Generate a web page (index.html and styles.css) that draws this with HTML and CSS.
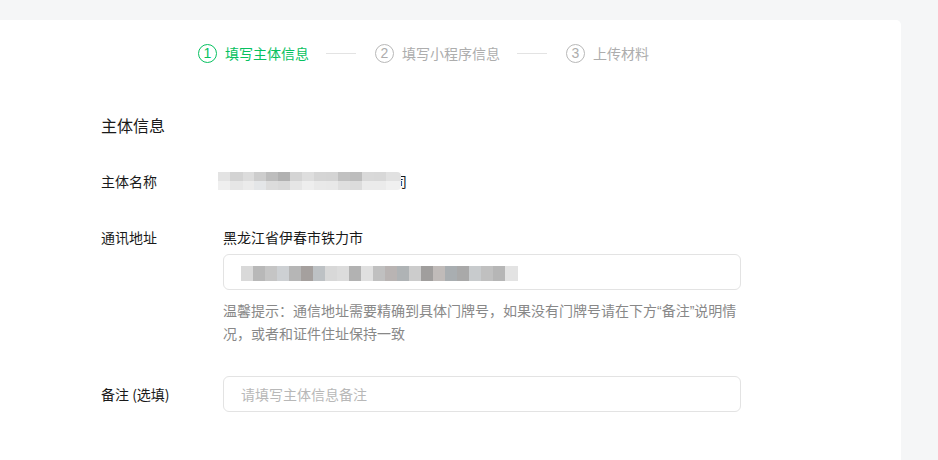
FILE: index.html
```html
<!DOCTYPE html>
<html lang="zh-CN">
<head>
<meta charset="utf-8">
<title>填写主体信息</title>
<link rel="stylesheet" href="styles.css">
</head>
<body>
<div class="card">
  <div class="steps">
    <div class="step active"><span class="num">1</span><span class="label">填写主体信息</span></div>
    <span class="line"></span>
    <div class="step"><span class="num">2</span><span class="label">填写小程序信息</span></div>
    <span class="line"></span>
    <div class="step"><span class="num">3</span><span class="label">上传材料</span></div>
  </div>

  <div class="form">
    <h2 class="title">主体信息</h2>

    <div class="row row-name">
      <div class="field-label">主体名称</div>
      <div class="field-value">
        <span class="mosaic mosaic-name"><span class="m-top"></span><span class="m-bottom"></span></span><span class="clip"><span class="clip-char">司</span></span>
      </div>
    </div>

    <div class="row row-addr">
      <div class="field-label">通讯地址</div>
      <div class="field-value">
        <div class="region">黑龙江省伊春市铁力市</div>
        <div class="input"><span class="mosaic mosaic-addr"></span></div>
        <p class="hint">温馨提示：通信地址需要精确到具体门牌号，如果没有门牌号请在下方<span class="q">“</span>备注<span class="q">”</span>说明情况，或者和证件住址保持一致</p>
      </div>
    </div>

    <div class="row row-note">
      <div class="field-label">备注 (选填)</div>
      <div class="field-value">
        <div class="input"><span class="placeholder">请填写主体信息备注</span></div>
      </div>
    </div>
  </div>
</div>
</body>
</html>
```

FILE: styles.css
```css
html, body {
  margin: 0;
  padding: 0;
}
body {
  background: #f5f6f7;
  font-family: "Noto Sans CJK SC", "Liberation Sans", sans-serif;
  color: #1a1a1a;
  font-size: 14px;
  padding-top: 20px;
  height: 440px;
  overflow: hidden;
}
.card {
  width: 901px;
  height: 460px;
  background: #fff;
  border-top-right-radius: 5px;
  box-sizing: border-box;
  padding-top: 23px;
}
.steps {
  display: flex;
  align-items: center;
  padding-left: 198px;
  height: 20px;
}
.step {
  display: flex;
  align-items: center;
  color: #adadad;
}
.num {
  width: 17px;
  height: 17px;
  border: 1px solid #b8b8b8;
  border-radius: 50%;
  display: flex;
  align-items: center;
  justify-content: center;
  font-family: "Liberation Sans", sans-serif;
  font-size: 14px;
  line-height: 1;
  margin-right: 8px;
}
.step.active { color: #07c160; }
.step.active .num { border-color: #07c160; }
.label {
  font-size: 14px;
  line-height: 20px;
}
.line {
  width: 30px;
  height: 1px;
  background: #e3e3e3;
  margin: 0 19px 0 17px;
}

.form {
  padding-left: 101px;
}
.title {
  margin: 50px 0 0;
  font-size: 16px;
  font-weight: normal;
  line-height: 24px;
  color: #1a1a1a;
}
.row {
  display: grid;
  grid-template-columns: 122px 518px;
}
.field-label {
  line-height: 20px;
  color: #1a1a1a;
}
.row-name { margin-top: 34px; }
.row-name .field-value {
  display: flex;
  align-items: center;
  margin-left: -5px;
  height: 20px;
}
.mosaic { display: block; }
.mosaic-name {
  width: 183px;
  height: 18px;
  display: flex;
  flex-direction: column;
  border-radius: 0 4px 4px 0;
  overflow: hidden;
}
.m-top, .m-bottom { flex: 1; display: block; }
.m-top {
  background: linear-gradient(to right,
    #e3e3e3 0 12px, #d3d3d3 12px 25px, #dcdcdc 25px 36px, #cdcdcd 36px 48px,
    #bdbdbd 48px 60px, #b1b1b1 60px 72px, #d4d4d4 72px 84px, #dedede 84px 96px,
    #d5d5d5 96px 108px, #d4d4d4 108px 120px, #c1c1c1 120px 132px, #bdbdbd 132px 144px,
    #d9d9d9 144px 156px, #d8d8d8 156px 168px, #e1e1e1 168px 183px);
}
.m-bottom {
  background: linear-gradient(to right,
    #efefef 0 12px, #e6e6e6 12px 25px, #ebebeb 25px 36px, #e4e6e8 36px 48px,
    #dcdcdc 48px 60px, #d9d9d9 60px 72px, #e6e6e6 72px 84px, #eeeeee 84px 96px,
    #e9e9e9 96px 108px, #e8e8e8 108px 120px, #dfdfdf 120px 132px, #dcdcdc 132px 144px,
    #ebebeb 144px 156px, #ebebeb 156px 168px, #f0f0f0 168px 183px);
}
.clip {
  display: inline-block;
  width: 6px;
  overflow: hidden;
  line-height: 20px;
}
.clip-char {
  display: inline-block;
  margin-left: -8px;
}

.row-addr { margin-top: 36px; }
.region {
  line-height: 20px;
  color: #1a1a1a;
}
.input {
  margin-top: 7px;
  height: 36px;
  box-sizing: border-box;
  border: 1px solid #e3e3e3;
  border-radius: 6px;
  display: flex;
  align-items: center;
  padding-left: 17px;
}
.mosaic-addr {
  width: 277px;
  height: 15px;
  margin-top: 2px;
  background: linear-gradient(to right,
    #d9d9d9 0 12px, #b8b8b8 12px 24px, #c5c5c5 24px 36px, #cdd0d3 36px 48px,
    #b6b6b6 48px 60px, #a5a09e 60px 72px, #bdc1c4 72px 84px, #d8d8d8 84px 96px,
    #dcdcdc 96px 108px, #b2b2b2 108px 120px, #e0e0e0 120px 132px, #c0c0c0 132px 144px,
    #b9b4b3 144px 156px, #afb3b5 156px 168px, #cccccc 168px 180px, #a09e9d 180px 192px,
    #c0bbb9 192px 204px, #a9aeb1 204px 216px, #a9a9a9 216px 228px, #c8cbcd 228px 240px,
    #c0c0c0 240px 252px, #b6b6b6 252px 264px, #e3e3e3 264px 277px);
}
.hint {
  margin: 9px 0 0;
  color: #888;
  font-size: 14px;
  line-height: 22px;
}
.q { font-family: "Liberation Sans", sans-serif; }
.row-note { margin-top: 32px; }
.row-note .field-label { line-height: 36px; }
.row-note .input { margin-top: 0; }
.placeholder { color: #b8b8b8; }
```
